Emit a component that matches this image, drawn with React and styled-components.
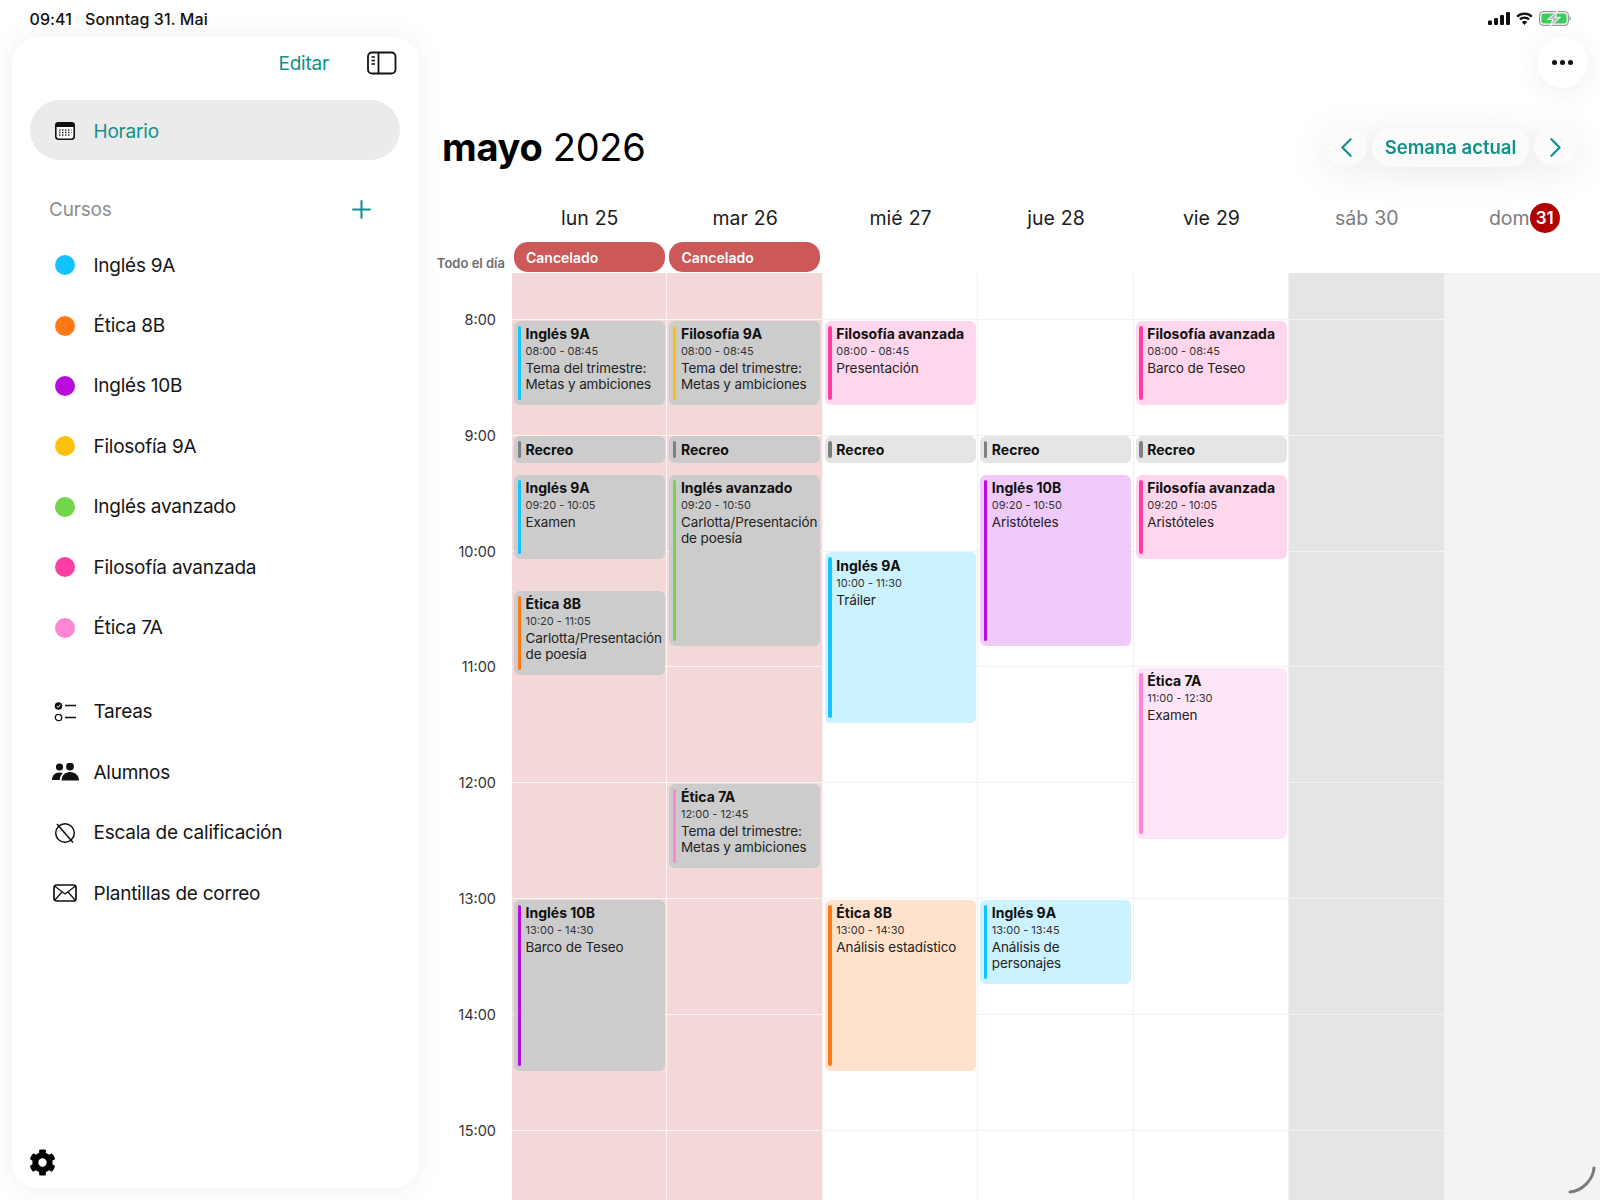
import styled, { createGlobalStyle } from "styled-components";
import { ChevronLeft, ChevronRight, Plus } from "lucide-react";
import { FaCog } from "react-icons/fa";

const HOUR = 115.8;
const GRID_OFFSET = 46;
const START = 8;

const COURSES = {
  "Inglés 9A": { bar: "#12c3ff", fill: "#ccf1ff" },
  "Ética 8B": { bar: "#ff7a14", fill: "#ffe2cc" },
  "Inglés 10B": { bar: "#b90de0", fill: "#f0caf9" },
  "Filosofía 9A": { bar: "#ffc107", fill: "#fff2c8" },
  "Inglés avanzado": { bar: "#72d54a", fill: "#e2f6d8" },
  "Filosofía avanzada": { bar: "#ff3ea5", fill: "#ffd6ec" },
  "Ética 7A": { bar: "#ff85d5", fill: "#ffe6f7" },
};

const BREAK_COLORS = { bar: "#808080", fill: "#e5e5e5" };

const DAYS = [
  {
    name: "lun",
    num: "25",
    cancelled: true,
    events: [
      ["Inglés 9A", "08:00", "08:45", "Tema del trimestre: Metas y ambiciones"],
      ["Recreo", "09:00", "09:15"],
      ["Inglés 9A", "09:20", "10:05", "Examen"],
      ["Ética 8B", "10:20", "11:05", "Carlotta/Presentación de poesía"],
      ["Inglés 10B", "13:00", "14:30", "Barco de Teseo"],
    ],
  },
  {
    name: "mar",
    num: "26",
    cancelled: true,
    events: [
      ["Filosofía 9A", "08:00", "08:45", "Tema del trimestre: Metas y ambiciones"],
      ["Recreo", "09:00", "09:15"],
      ["Inglés avanzado", "09:20", "10:50", "Carlotta/Presentación de poesía"],
      ["Ética 7A", "12:00", "12:45", "Tema del trimestre: Metas y ambiciones"],
    ],
  },
  {
    name: "mié",
    num: "27",
    events: [
      ["Filosofía avanzada", "08:00", "08:45", "Presentación"],
      ["Recreo", "09:00", "09:15"],
      ["Inglés 9A", "10:00", "11:30", "Tráiler"],
      ["Ética 8B", "13:00", "14:30", "Análisis estadístico"],
    ],
  },
  {
    name: "jue",
    num: "28",
    events: [
      ["Recreo", "09:00", "09:15"],
      ["Inglés 10B", "09:20", "10:50", "Aristóteles"],
      ["Inglés 9A", "13:00", "13:45", "Análisis de personajes"],
    ],
  },
  {
    name: "vie",
    num: "29",
    events: [
      ["Filosofía avanzada", "08:00", "08:45", "Barco de Teseo"],
      ["Recreo", "09:00", "09:15"],
      ["Filosofía avanzada", "09:20", "10:05", "Aristóteles"],
      ["Ética 7A", "11:00", "12:30", "Examen"],
    ],
  },
  { name: "sáb", num: "30", weekend: "sat", events: [] },
  { name: "dom", num: "31", weekend: "sun", today: true, events: [] },
];

const HOURS = Array.from({ length: 8 }, (_, i) => START + i);

const toHours = (t) => {
  const [h, m] = t.split(":").map(Number);
  return h + m / 60;
};

const GlobalStyle = createGlobalStyle`
  html, body {
    margin: 0;
    padding: 0;
    background: #fff;
  }
  body {
    font-family: Inter, "Noto Sans", "Liberation Sans", sans-serif;
    color: #111;
  }
`;

const Screen = styled.div`
  width: 1600px;
  height: 1200px;
  position: relative;
  overflow: hidden;
  display: flex;
  flex-direction: column;
  background: #fff;
`;

const StatusBar = styled.div`
  height: 37px;
  flex: none;
  display: flex;
  align-items: center;
  justify-content: space-between;
  padding: 0 29px 0 29.5px;
  font-size: 16px;
  font-weight: 500;
  letter-spacing: 0.1px;
  color: #111;
  position: relative;
  z-index: 2;
`;

const StatusLeft = styled.div`
  display: flex;
  gap: 13px;
`;

const StatusIcons = styled.div`
  display: flex;
  align-items: center;
  gap: 6px;
`;

const Body = styled.div`
  flex: 1;
  display: flex;
  min-height: 0;
`;

const Sidebar = styled.aside`
  width: 406.5px;
  margin: 0 0 12px 12px;
  flex: none;
  background: #fff;
  border-radius: 26px;
  box-shadow: 0 0 28px rgba(0, 0, 0, 0.07);
  display: flex;
  flex-direction: column;
  padding: 0 18.5px 0 18px;
  box-sizing: border-box;
  position: relative;
  z-index: 1;
`;

const SideTop = styled.div`
  height: 52px;
  display: flex;
  align-items: center;
  justify-content: flex-end;
  gap: 38px;
  padding-right: 3px;
`;

const TealText = styled.span`
  color: #12908a;
  font-size: 19px;
  letter-spacing: -0.2px;
`;

const Selected = styled.div`
  height: 60px;
  margin-top: 11px;
  padding: 2px 0 0 24px;
  box-sizing: border-box;
  border-radius: 30px;
  background: #ebebeb;
  display: flex;
  align-items: center;
  gap: 17.5px;
`;

const IconSlot = styled.span`
  width: 22px;
  flex: none;
  display: flex;
  align-items: center;
  justify-content: center;
  color: #111;
  svg {
    flex: none;
  }
`;

const SectionHead = styled.div`
  margin-top: 24px;
  height: 51px;
  display: flex;
  align-items: center;
  justify-content: space-between;
  padding: 0 24.5px 0 19px;
  color: #8e8e8e;
  font-size: 19px;
  letter-spacing: -0.2px;
`;

const Row = styled.div`
  height: 60.4px;
  display: flex;
  align-items: center;
  gap: 17.5px;
  padding-left: 24px;
  font-size: 19px;
  letter-spacing: -0.25px;
  color: #151515;
`;

const Dot = styled.span`
  width: 20px;
  height: 20px;
  flex: none;
  border-radius: 50%;
  background: ${(p) => p.$color};
`;

const Tools = styled.div`
  margin-top: 24px;
`;

const GearSlot = styled.div`
  margin: auto 0 0 -1.5px;
  height: 51px;
  padding-top: 12px;
  box-sizing: border-box;
`;

const Main = styled.main`
  flex: 1;
  min-width: 0;
  display: flex;
  flex-direction: column;
`;

const MoreRow = styled.div`
  height: 51px;
  flex: none;
  display: flex;
  justify-content: flex-end;
  padding-right: 12.5px;
`;

const MoreButton = styled.div`
  width: 51px;
  height: 51px;
  border-radius: 50%;
  background: #fff;
  box-shadow: 0 4px 30px rgba(0, 0, 0, 0.07);
  display: flex;
  align-items: center;
  justify-content: center;
  gap: 3px;
`;

const MoreDot = styled.span`
  width: 5px;
  height: 5px;
  border-radius: 50%;
  background: #111;
`;

const TitleRow = styled.div`
  height: 40px;
  flex: none;
  margin-top: 39px;
  padding: 0 24px 0 23.5px;
  display: flex;
  align-items: center;
  justify-content: space-between;
`;

const Title = styled.h1`
  margin: 0;
  font-size: 38px;
  font-weight: 400;
  letter-spacing: -0.3px;
  color: #000;
  b {
    font-weight: 700;
  }
`;

const Nav = styled.div`
  display: flex;
  align-items: center;
  gap: 5px;
  filter: drop-shadow(0 6px 18px rgba(0, 0, 0, 0.09));
`;

const NavRound = styled.div`
  width: 42px;
  height: 35px;
  border-radius: 18px;
  background: #fbfbfb;
  color: #12908a;
  display: flex;
  align-items: center;
  justify-content: center;
  svg {
    flex: none;
  }
`;

const NavPill = styled.div`
  height: 39px;
  width: 157px;
  border-radius: 20px;
  background: #fbfbfb;
  color: #12908a;
  font-size: 18.5px;
  font-weight: 600;
  display: flex;
  align-items: center;
  justify-content: center;
`;

const Columns = styled.div`
  display: grid;
  grid-template-columns: 93.5px repeat(7, 1fr);
  flex: none;
`;

const DayHead = styled.div`
  height: 30px;
  margin-top: 36px;
  padding-left: ${(p) => (p.$today ? "4px" : "0")};
  display: flex;
  align-items: center;
  justify-content: center;
  gap: 6px;
  font-size: 19.5px;
  color: ${(p) => (p.$weekend ? "#7c7c7c" : "#1c1c1c")};
`;

const TodayBadge = styled.span`
  width: 30px;
  height: 30px;
  margin-left: -6px;
  border-radius: 50%;
  background: #b00000;
  color: #fff;
  font-size: 17px;
  font-weight: 600;
  display: flex;
  align-items: center;
  justify-content: center;
`;

const AllDayLabel = styled.div`
  align-self: end;
  text-align: right;
  padding: 0 7px 2px 0;
  font-size: 13px;
  font-weight: 600;
  color: #6e6e6e;
  white-space: nowrap;
`;

const AllDayCell = styled.div`
  height: 40px;
  padding: 9px 2.5px 1px 2px;
  box-sizing: border-box;
`;

const Cancelled = styled.div`
  height: 100%;
  border-radius: 14px;
  background: #cd5858;
  color: #fff;
  font-size: 14px;
  font-weight: 600;
  display: flex;
  align-items: center;
  padding-left: 12px;
`;

const Schedule = styled.div`
  flex: 1;
  min-height: 0;
  overflow: hidden;
  display: grid;
  grid-template-columns: 93.5px repeat(7, 1fr);
`;

const Gutter = styled.div`
  padding-top: ${GRID_OFFSET}px;
`;

const HourLabel = styled.div`
  height: ${HOUR}px;
  padding-right: 16px;
  text-align: right;
  font-size: 14.5px;
  line-height: 1;
  color: #333;
  transform: translateY(-6px);
`;

const dayBackground = (p) => {
  if (p.$cancelled) return "#f4d8d8";
  if (p.$weekend === "sat") return "#e5e5e5";
  if (p.$weekend === "sun") return "#f3f3f3";
  return "#fff";
};

const dayLine = (p) => {
  if (p.$cancelled) return "#fdf5f5";
  if (p.$weekend === "sat") return "#f2f2f2";
  if (p.$weekend === "sun") return "#f3f3f3";
  return "#f1f1f1";
};

const DayColumn = styled.div`
  position: relative;
  padding-top: ${GRID_OFFSET}px;
  background: ${dayBackground};
  border-right: 1px solid ${dayLine};
  box-sizing: border-box;
`;

const HourCell = styled.div`
  height: ${HOUR}px;
  box-sizing: border-box;
  border-top: 1px solid ${dayLine};
`;

const Event = styled.div`
  position: absolute;
  left: 2px;
  right: 1.5px;
  box-sizing: border-box;
  border-radius: 6px;
  overflow: hidden;
  background: ${(p) => p.$fill};
  padding: 4.5px 0 0 11.5px;
`;

const EventBar = styled.span`
  position: absolute;
  left: 3.5px;
  top: 5px;
  bottom: 5px;
  width: 3.5px;
  border-radius: 2px;
  background: ${(p) => p.$color};
`;

const EventTitle = styled.div`
  font-size: 14px;
  line-height: 18px;
  font-weight: 700;
  color: #111;
  white-space: nowrap;
`;

const EventTime = styled.div`
  font-size: 11px;
  line-height: 16px;
  color: #333;
`;

const EventText = styled.div`
  margin-top: 1px;
  font-size: 13.5px;
  line-height: 16px;
  letter-spacing: -0.1px;
  color: #222;
`;

const ScrollArc = styled.svg`
  position: absolute;
  right: 4px;
  bottom: 6px;
`;

const Signal = () => (
  <svg width="22" height="13" viewBox="0 0 22 13">
    <rect x="0" y="8.5" width="4" height="4.5" rx="1" fill="#111" />
    <rect x="6" y="6" width="4" height="7" rx="1" fill="#111" />
    <rect x="12" y="3" width="4" height="10" rx="1" fill="#111" />
    <rect x="18" y="0" width="4" height="13" rx="1" fill="#111" />
  </svg>
);

const Wifi = () => (
  <svg width="17" height="13" viewBox="0 0 17 13">
    <path d="M1.2 4.6a10.4 10.4 0 0 1 14.6 0" fill="none" stroke="#111" strokeWidth="2.2" />
    <path d="M3.9 7.4a6.6 6.6 0 0 1 9.2 0" fill="none" stroke="#111" strokeWidth="2.2" />
    <path d="M8.5 13 5.9 10.1a3.6 3.6 0 0 1 5.2 0z" fill="#111" />
  </svg>
);

const Battery = () => (
  <svg width="32" height="15" viewBox="0 0 32 15">
    <rect x="0.6" y="0.6" width="28.8" height="13.8" rx="4" fill="none" stroke="#9a9a9a" strokeWidth="1.2" />
    <rect x="2.4" y="2.4" width="25.2" height="10.2" rx="2.4" fill="#3ccb5c" />
    <path d="M30.6 5v5c.9-.3 1.4-1.4 1.4-2.5S31.5 5.3 30.6 5z" fill="#9a9a9a" />
    <path d="M18.5 0 8.5 8.5h5.300L11.5 15 21.5 6.300h-5.400z" fill="#bdbdbd" stroke="#fff" strokeWidth="1" />
  </svg>
);

const PanelIcon = () => (
  <svg width="30" height="24" viewBox="0 0 30 24">
    <rect x="1" y="1.5" width="27.5" height="21" rx="4" fill="none" stroke="#111" strokeWidth="1.8" />
    <path d="M11.5 1.5v21" stroke="#111" strokeWidth="1.8" />
    <path d="M4.5 6h3.500M4.500 9.500h3.500M4.500 13h3.500" stroke="#111" strokeWidth="1.5" />
  </svg>
);

const CalendarIcon = () => (
  <svg width="20" height="18" viewBox="0 0 20 18">
    <rect x="0.8" y="0.8" width="18.4" height="16.4" rx="2.6" fill="#fff" stroke="#111" strokeWidth="1.6" />
    <path d="M2 1h16a1.500 1.500 0 0 1 1.500 1.500V5H.5V2.500A1.500 1.500 0 0 1 2 1z" fill="#111" />
    <path
      d="M4 8h1.500M7 8h1.500M10 8h1.500M13 8h1.500M16 8h.5M4 10.500h1.500M7 10.500h1.500M10 10.500h1.500M13 10.500h1.500M16 10.500h.5M4 13h1.500M7 13h1.500M10 13h1.500M13 13h1.500"
      stroke="#333"
      strokeWidth="1.3"
    />
  </svg>
);

const TasksIcon = () => (
  <svg width="23" height="20" viewBox="0 0 23 20">
    <circle cx="4.5" cy="4" r="3.8" fill="#111" />
    <path d="M2.800 4l1.300 1.300 2.200-2.600" fill="none" stroke="#fff" strokeWidth="1" />
    <circle cx="4.5" cy="15.5" r="3.2" fill="none" stroke="#111" strokeWidth="1.3" />
    <path d="M11 3.500h11M11 15.500h11" stroke="#111" strokeWidth="1.5" />
  </svg>
);

const PeopleIcon = () => (
  <svg width="27" height="18" viewBox="0 0 27 18">
    <circle cx="7.5" cy="4" r="3.6" fill="#111" />
    <circle cx="18" cy="3.5" r="3.9" fill="#111" />
    <path d="M0 17c0-4.500 3-7.500 7.500-7.500 1.300 0 2.500.3 3.400.8-1.900 1.500-3 3.800-3.200 6.700z" fill="#111" />
    <path d="M9.500 17.500c0-5 3.500-8.500 8.500-8.500s9 3.500 9 8.500z" fill="#111" />
  </svg>
);

const GradeIcon = () => (
  <svg width="22" height="22" viewBox="0 0 22 22">
    <circle cx="11" cy="11" r="9.3" fill="none" stroke="#111" strokeWidth="1.5" />
    <path d="M3 2l16 18.500" stroke="#111" strokeWidth="1.5" />
  </svg>
);

const MailIcon = () => (
  <svg width="24" height="18" viewBox="0 0 24 18">
    <rect x="1" y="1" width="22" height="16" rx="2.5" fill="none" stroke="#111" strokeWidth="1.7" />
    <path d="M1.500 2l10.500 8 10.500-8M1.500 16.500l7.500-8.500M22.500 16.500l-7.500-8.500" fill="none" stroke="#111" strokeWidth="1.3" />
  </svg>
);

const EventCard = ({ title, from, to, text, cancelled }) => {
  const start = toHours(from);
  const end = toHours(to);
  const isBreak = title === "Recreo";
  const colors = isBreak ? BREAK_COLORS : COURSES[title];
  const top = GRID_OFFSET + (start - START) * HOUR + 1.5;
  const height = (end - start) * HOUR - 2.5;
  return (
    <Event $fill={cancelled ? "#cccccc" : colors.fill} style={{ top, height }}>
      <EventBar $color={colors.bar} />
      <EventTitle>{title}</EventTitle>
      {!isBreak && (
        <>
          <EventTime>
            {from} - {to}
          </EventTime>
          <EventText>{text}</EventText>
        </>
      )}
    </Event>
  );
};

const App = () => {
  return (
    <Screen>
      <GlobalStyle />
      <StatusBar>
        <StatusLeft>
          <span>09:41</span>
          <span>Sonntag 31. Mai</span>
        </StatusLeft>
        <StatusIcons>
          <Signal />
          <Wifi />
          <Battery />
        </StatusIcons>
      </StatusBar>
      <Body>
        <Sidebar>
          <SideTop>
            <TealText>Editar</TealText>
            <PanelIcon />
          </SideTop>
          <Selected>
            <IconSlot>
              <CalendarIcon />
            </IconSlot>
            <TealText>Horario</TealText>
          </Selected>
          <SectionHead>
            <span>Cursos</span>
            <Plus size={29} color="#12908a" strokeWidth={1.7} />
          </SectionHead>
          {Object.keys(COURSES).map((name) => (
            <Row key={name}>
              <IconSlot>
                <Dot $color={COURSES[name].bar} />
              </IconSlot>
              {name}
            </Row>
          ))}
          <Tools>
            <Row>
              <IconSlot>
                <TasksIcon />
              </IconSlot>
              Tareas
            </Row>
            <Row>
              <IconSlot>
                <PeopleIcon />
              </IconSlot>
              Alumnos
            </Row>
            <Row>
              <IconSlot>
                <GradeIcon />
              </IconSlot>
              Escala de calificación
            </Row>
            <Row>
              <IconSlot>
                <MailIcon />
              </IconSlot>
              Plantillas de correo
            </Row>
          </Tools>
          <GearSlot>
            <FaCog size={27} color="#000" />
          </GearSlot>
        </Sidebar>
        <Main>
          <MoreRow>
            <MoreButton>
              <MoreDot />
              <MoreDot />
              <MoreDot />
            </MoreButton>
          </MoreRow>
          <TitleRow>
            <Title>
              <b>mayo</b> 2026
            </Title>
            <Nav>
              <NavRound>
                <ChevronLeft size={33} strokeWidth={1.6} />
              </NavRound>
              <NavPill>Semana actual</NavPill>
              <NavRound>
                <ChevronRight size={33} strokeWidth={1.6} />
              </NavRound>
            </Nav>
          </TitleRow>
          <Columns>
            <div />
            {DAYS.map((d) => (
              <DayHead key={d.num} $weekend={d.weekend} $today={d.today}>
                <span>{d.name}</span>
                {d.today ? <TodayBadge>{d.num}</TodayBadge> : <span>{d.num}</span>}
              </DayHead>
            ))}
            <AllDayLabel>Todo el día</AllDayLabel>
            {DAYS.map((d) => (
              <AllDayCell key={d.num}>{d.cancelled && <Cancelled>Cancelado</Cancelled>}</AllDayCell>
            ))}
          </Columns>
          <Schedule>
            <Gutter>
              {HOURS.map((h) => (
                <HourLabel key={h}>{h}:00</HourLabel>
              ))}
            </Gutter>
            {DAYS.map((d) => (
              <DayColumn key={d.num} $cancelled={d.cancelled} $weekend={d.weekend}>
                {HOURS.map((h) => (
                  <HourCell key={h} $cancelled={d.cancelled} $weekend={d.weekend} />
                ))}
                {d.events.map(([title, from, to, text]) => (
                  <EventCard key={title + from} title={title} from={from} to={to} text={text} cancelled={d.cancelled} />
                ))}
              </DayColumn>
            ))}
          </Schedule>
        </Main>
      </Body>
      <ScrollArc width="28" height="28" viewBox="0 0 28 28">
        <path d="M26 2C25 14 14 25 2 26" fill="none" stroke="#7a7a7a" strokeWidth="3" strokeLinecap="round" />
      </ScrollArc>
    </Screen>
  );
};

export default App;
